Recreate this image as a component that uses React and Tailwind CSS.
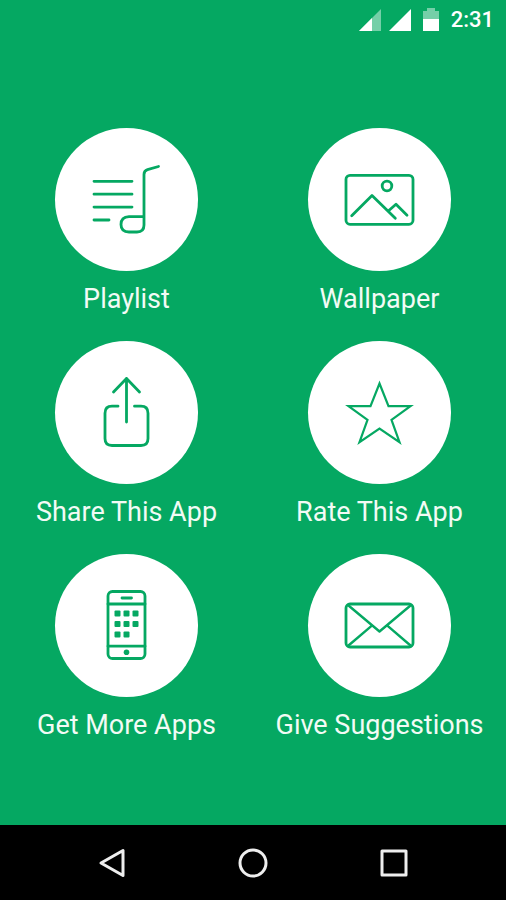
import React from 'react';

const Icon = ({ children }) => (
  <svg
    viewBox="0 0 143 143"
    className="w-full h-full text-[#05a862]"
    fill="none"
    stroke="currentColor"
    strokeWidth="2.8"
    strokeLinecap="round"
    strokeLinejoin="round"
    aria-hidden="true"
  >
    {children}
  </svg>
);

const PlaylistIcon = () => (
  <Icon>
    <path d="M39 53.3h38M39 66.2h38M39 79.1h38M39 92h15" />
    <path d="M103.5 38.5l-11 3.2q-3.5 1.1-3.5 4.8V97q0 7-7 7h-8q-8 0-8-7.500t8-7.800h14" />
  </Icon>
);

const WallpaperIcon = () => (
  <Icon>
    <rect x="38" y="47.3" width="67" height="49" rx="4" />
    <circle cx="79" cy="58" r="4.8" />
    <path d="M43.7 87.7L64 67.500l23.300 22.800M80.300 83l7.700-6.700 11 11" />
  </Icon>
);

const ShareIcon = () => (
  <Icon>
    <path d="M71.500 81V37.500M58.500 51l13-13.500 13 13.500" />
    <path d="M63 65.200h-6q-7 0-7 7v25.300q0 7 7 7h29q7 0 7-7V72.200q0-7-7-7h-6.500" />
  </Icon>
);

const StarIcon = () => (
  <Icon>
    <path
      strokeWidth="2.2"
      strokeLinecap="butt"
      strokeLinejoin="miter"
      d="M71.500 42.500l9 22.700H102.500L83.500 78.800l8 22.400-20-13.600-20 13.600 8-22.400-19-13.600h22z"
    />
  </Icon>
);

const PhoneIcon = () => (
  <Icon>
    <rect x="53" y="37.500" width="37" height="67" rx="4.500" />
    <path d="M53 50h37M53 92.200h37M67 44h9.500" />
    <circle cx="71.500" cy="98.200" r="2.800" fill="currentColor" stroke="none" />
    {[59.5, 70, 80.5].map((y, row) =>
      [62.5, 71.5, 80.5].slice(0, row === 2 ? 2 : 3).map((x) => (
        <rect key={`${x}-${y}`} x={x - 3} y={y - 3} width="6" height="6" rx="1" fill="currentColor" stroke="none" />
      ))
    )}
  </Icon>
);

const MailIcon = () => (
  <Icon>
    <rect x="38" y="50" width="67" height="43" rx="4" />
    <path d="M40.500 51.500l31 26 31-26M40.500 91.500L63 72.300M102.500 91.500L80.200 72.300" strokeWidth="2.400" />
  </Icon>
);

const items = [
  { label: 'Playlist', icon: PlaylistIcon },
  { label: 'Wallpaper', icon: WallpaperIcon },
  { label: 'Share This App', icon: ShareIcon },
  { label: 'Rate This App', icon: StarIcon },
  { label: 'Get More Apps', icon: PhoneIcon },
  { label: 'Give Suggestions', icon: MailIcon },
];

const StatusBar = () => (
  <header className="h-10 flex items-center justify-end pr-3 text-white">
    <svg width="22" height="22" viewBox="0 0 22 22" fill="currentColor" className="mr-2" aria-hidden="true">
      <path d="M0 22L22 0v22z" opacity="0.45" />
      <path d="M0 22L13 9v13z" />
    </svg>
    <svg width="22" height="22" viewBox="0 0 22 22" fill="currentColor" className="mr-3" aria-hidden="true">
      <path d="M0 22L22 0v22z" />
    </svg>
    <svg width="16" height="24" viewBox="0 0 16 24" fill="currentColor" className="mr-3" aria-hidden="true">
      <path d="M0 11V3h4V0h8v3h4v8z" opacity="0.45" />
      <path d="M0 11h16v12H0z" />
    </svg>
    <span className="text-[22px] leading-6 font-medium">2:31</span>
  </header>
);

const MenuItem = ({ label, icon: Glyph }) => (
  <button type="button" className="flex flex-col items-center gap-3 cursor-pointer">
    <span className="w-[143px] h-[143px] rounded-full bg-white">
      <Glyph />
    </span>
    <span className="text-[27px] leading-8 text-[#f2fbf5] whitespace-nowrap">{label}</span>
  </button>
);

const NavBar = () => (
  <nav className="h-[75px] bg-black px-[42px] grid grid-cols-3 text-[#eeeeee]">
    <button type="button" aria-label="Back" className="flex items-center justify-center">
      <svg width="30" height="30" viewBox="0 0 30 30" fill="none" stroke="currentColor" strokeWidth="3" strokeLinejoin="round">
        <path d="M26 2.500v25L4 15z" />
      </svg>
    </button>
    <button type="button" aria-label="Home" className="flex items-center justify-center">
      <svg width="30" height="30" viewBox="0 0 30 30" fill="none" stroke="currentColor" strokeWidth="3">
        <circle cx="15" cy="15" r="13" />
      </svg>
    </button>
    <button type="button" aria-label="Recent apps" className="flex items-center justify-center">
      <svg width="30" height="30" viewBox="0 0 30 30" fill="none" stroke="currentColor" strokeWidth="3" strokeLinejoin="round">
        <rect x="3" y="3" width="24" height="24" />
      </svg>
    </button>
  </nav>
);

export default function App() {
  return (
    <div className="min-h-screen flex flex-col bg-[#05a862] font-[Roboto,sans-serif]">
      <StatusBar />
      <main className="flex-1 pt-1 grid grid-cols-2 gap-y-[26px] content-center justify-items-center">
        {items.map((item) => (
          <MenuItem key={item.label} {...item} />
        ))}
      </main>
      <NavBar />
    </div>
  );
}
